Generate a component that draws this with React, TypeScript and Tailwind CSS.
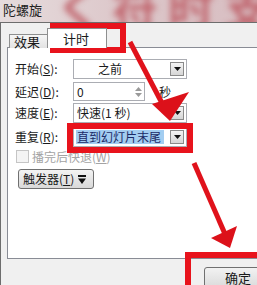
import React from "react";

const font = "font-['Noto_Sans_CJK_SC','Noto_Sans',sans-serif]";

function DropButton() {
  return (
    <div className="w-[14px] h-[14px] border border-[#8a8a8a] bg-gradient-to-b from-[#f4f4f4] to-[#d6d6d6] flex items-center justify-center">
      <svg width="7" height="4" viewBox="0 0 7 4">
        <path d="M0 0 H7 L3.5 4 Z" fill="#111" />
      </svg>
    </div>
  );
}

function Label({ text, k }: { text: string; k: string }) {
  return (
    <span className="w-[58px] shrink-0 whitespace-nowrap leading-none">
      {text}(<u>{k}</u>):
    </span>
  );
}

export default function App() {
  return (
    <div className={`relative w-[257px] h-[285px] overflow-hidden bg-[#f0f0f0] text-[12px] text-[#1a1a1a] ${font}`}>
      {/* title bar */}
      <div className="relative h-[22px] overflow-hidden bg-gradient-to-r from-[#e6dcdd] via-[#dcc6c9] to-[#d8bec2]">
        <div className="absolute left-[56px] top-[-18px] flex gap-[10px] text-[46px] leading-none font-bold text-[#b02a36]/60 blur-[3px] whitespace-nowrap">
          <span>く</span>
          <span>符</span>
          <span>时</span>
          <span>支</span>
        </div>
        <span className="relative pl-[3px] text-[13px] leading-[20px] text-[#222]">陀螺旋</span>
      </div>

      <div className="flex h-[263px]">
        <div className="w-[3px] bg-gradient-to-b from-[#e4d8da] via-[#b88388] to-[#6e2a2c]" />
        <div className="flex-1 flex flex-col border-t border-l border-[#6d6d6d]">
          {/* tabs */}
          <div className="relative z-10 -mb-px flex items-end h-[25px] pt-[5px] pl-[8px]">
            <div className="w-[40px] h-[14px] border border-b-0 border-[#8e8f8f] bg-gradient-to-b from-[#f6f6f6] to-[#e2e2e2] pl-[4px] text-[13px] leading-[14px]">
              效果
            </div>
            <div className="-ml-[2px] w-[60px] h-[20px] border border-b-0 border-[#8e8f8f] bg-white pl-[15px] pt-[2px] text-[13px] leading-[16px]">
              计时
            </div>
          </div>

          {/* panel */}
          <div className="ml-[6px] w-[260px] h-[212px] shrink-0 border border-[#898c95] bg-white pl-[7px] pt-[11px] flex flex-col">
            <div className="flex items-center h-[19px]">
              <Label text="开始" k="S" />
              <div className="w-[114px] h-[20px] border border-[#abadb3] flex items-center justify-between pl-[24px] pr-[2px]">
                <span className="leading-none">之前</span>
                <DropButton />
              </div>
            </div>

            <div className="flex items-center h-[19px] mt-[4px]">
              <Label text="延迟" k="D" />
              <div className="w-[72px] h-[19px] border border-[#abadb3] flex items-center justify-between pl-[3px] pr-[1px]">
                <span className="leading-none">0</span>
                <div className="flex flex-col items-center justify-center gap-[2px] w-[10px] h-[15px]">
                  <svg width="7" height="4" viewBox="0 0 7 4">
                    <path d="M0 4 H7 L3.5 0 Z" fill="#9a9a9a" />
                  </svg>
                  <svg width="7" height="4" viewBox="0 0 7 4">
                    <path d="M0 0 H7 L3.5 4 Z" fill="#9a9a9a" />
                  </svg>
                </div>
              </div>
              <span className="ml-[14px] leading-none">秒</span>
            </div>

            <div className="flex items-center h-[19px] mt-[2px]">
              <Label text="速度" k="E" />
              <div className="w-[114px] h-[20px] border border-[#abadb3] flex items-center justify-between pl-[3px] pr-[2px]">
                <span className="leading-none whitespace-nowrap">快速(1 秒)</span>
                <DropButton />
              </div>
            </div>

            <div className="flex items-center h-[19px] mt-[5px]">
              <Label text="重复" k="R" />
              <div className="w-[114px] h-[20px] border border-[#abadb3] flex items-center justify-between pl-[2px] pr-[2px]">
                <span className="w-[88px] h-[14px] bg-[#a3cdf1] text-[#1b2a66] leading-[14px] pl-[1px] whitespace-nowrap">
                  直到幻灯片末尾
                </span>
                <DropButton />
              </div>
            </div>

            <div className="flex items-center h-[15px] mt-[3px] ml-[1px] text-[#a3a3a3]">
              <div className="w-[13px] h-[13px] border border-[#c5c5c5] bg-[#f4f4f4]" />
              <span className="ml-[3px] leading-none">
                播完后快退(<u>W</u>)
              </span>
            </div>

            <div className="mt-[5px] ml-[3px] w-[76px] h-[20px] rounded-[3px] border border-[#707070] bg-gradient-to-b from-[#f3f3f3] to-[#d9d9d9] flex items-center pl-[4px] gap-[4px]">
              <span className="leading-none whitespace-nowrap">
                触发器(<u>T</u>)
              </span>
              <svg width="8" height="9" viewBox="0 0 8 9">
                <rect x="0" y="0" width="8" height="2" fill="#111" />
                <path d="M0 3.5 H8 L4 9 Z" fill="#111" />
              </svg>
            </div>
          </div>

          {/* buttons */}
          <div className="mt-[8px] ml-[203px] w-[70px] h-[24px] rounded-[3px] border border-[#707070] bg-gradient-to-b from-[#f2f2f2] to-[#dadada] pl-[20px] text-[13px] leading-[20px]">
            确定
          </div>
        </div>
      </div>

      {/* annotations */}
      <svg className="absolute inset-0 pointer-events-none" width="257" height="285" viewBox="0 0 257 285">
        <g fill="none" stroke="#e8131c" strokeWidth="6">
          <rect x="53" y="26" width="70" height="24" />
          <rect x="70" y="126" width="120" height="24" />
          <rect x="188" y="255" width="100" height="60" />
        </g>
        <g stroke="#e0121b" strokeWidth="5" strokeLinecap="butt">
          <line x1="130" y1="42" x2="163" y2="105" />
          <line x1="194" y1="163" x2="225" y2="234" />
        </g>
        <g fill="#dc111a">
          <polygon points="152,104 189,92 170,121" />
          <polygon points="211,238 237,226 230,248" />
        </g>
      </svg>
    </div>
  );
}
